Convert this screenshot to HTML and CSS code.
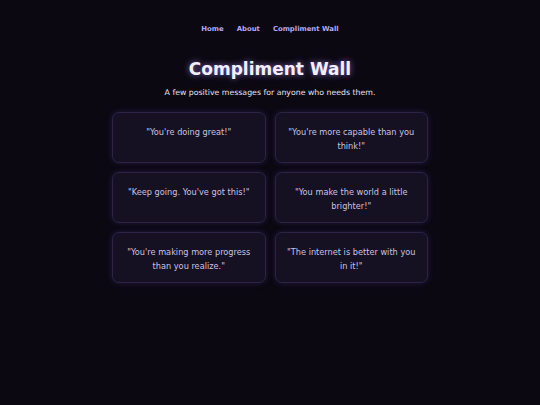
FILE: index.html
```html
<!DOCTYPE html>
<html lang="en">
<head>
<meta charset="utf-8">
<title>Compliment Wall</title>
<link rel="stylesheet" href="styles.css">
</head>
<body>
<nav class="nav">
  <a href="#" class="nav-link">Home</a>
  <a href="#" class="nav-link">About</a>
  <a href="#" class="nav-link">Compliment Wall</a>
</nav>
<header class="hero">
  <h1 class="title">Compliment Wall</h1>
  <p class="subtitle">A few positive messages for anyone who needs them.</p>
</header>
<main class="wall">
  <div class="card">"You're doing great!"</div>
  <div class="card">"You're more capable than you think!"</div>
  <div class="card">"Keep going. You've got this!"</div>
  <div class="card">"You make the world a little brighter!"</div>
  <div class="card">"You're making more progress than you realize."</div>
  <div class="card">"The internet is better with you in it!"</div>
</main>
</body>
</html>
```
FILE: styles.css
```css
html, body {
  margin: 0;
  padding: 0;
}
body {
  background: #0b0812;
  font-family: "DejaVu Sans", Verdana, sans-serif;
  color: #d8d2ea;
  min-height: 405px;
}
.nav {
  display: flex;
  justify-content: center;
  gap: 13px;
  padding-top: 24px;
}
.nav-link {
  color: #b7a9ee;
  font-weight: bold;
  font-size: 6.9px;
  text-decoration: none;
  line-height: 10px;
}
.hero {
  text-align: center;
  margin-top: 24px;
}
.title {
  margin: 0;
  font-size: 17px;
  line-height: 22px;
  font-weight: bold;
  color: #f3eeff;
  text-shadow: 0 0 6px rgba(190, 150, 255, 0.7);
}
.subtitle {
  margin: 7px 0 0;
  font-size: 7.8px;
  line-height: 11px;
  color: #e6e2f0;
}
.wall {
  width: 316px;
  margin: 14px auto 0;
  display: grid;
  grid-template-columns: 1fr 1fr;
  gap: 9px;
}
.card {
  box-sizing: border-box;
  min-height: 51px;
  padding: 12px 10px 9px;
  background: #151022;
  border: 1px solid #2c2346;
  border-radius: 7px;
  box-shadow: 0 0 6px rgba(110, 80, 200, 0.25);
  text-align: center;
  font-size: 8.2px;
  line-height: 14px;
  color: #cbc3e2;
}
```
